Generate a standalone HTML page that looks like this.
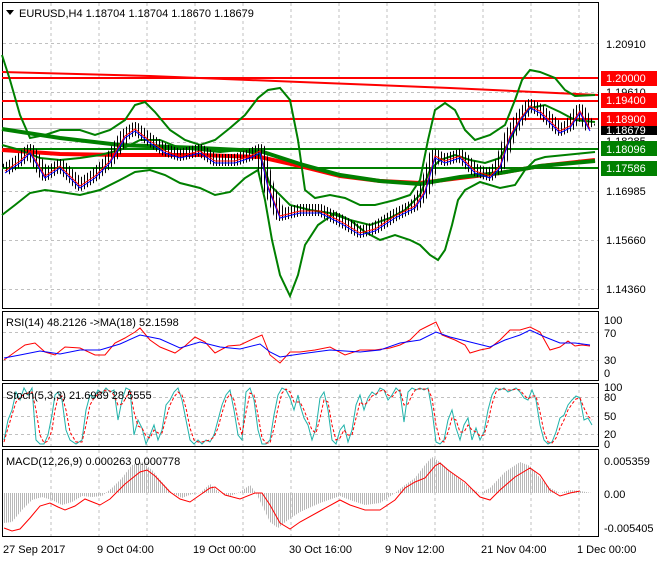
<!DOCTYPE html>
<html><head><meta charset="utf-8"><style>
body{margin:0;background:#fff;width:660px;height:560px;overflow:hidden}
svg text{font-family:"Liberation Sans",sans-serif;font-size:11px;fill:#000}
</style></head><body>
<svg width="660" height="560" xmlns="http://www.w3.org/2000/svg">
<defs>
<pattern id="hp" width="2" height="10" patternUnits="userSpaceOnUse"><rect x="0" y="0" width="1" height="10" fill="#b8b8b8"/></pattern>
<pattern id="bp" width="3" height="10" patternUnits="userSpaceOnUse"><rect x="0" y="0" width="1" height="10" fill="#000"/></pattern>
<mask id="bm" maskUnits="userSpaceOnUse" x="0" y="0" width="660" height="320">
<polyline fill="none" stroke="#fff" stroke-width="12" stroke-linejoin="round" points="5,170 20,160 30,150 45,175 60,165 80,185 95,175 110,160 125,135 135,128 150,140 165,150 180,155 200,150 215,160 235,160 250,155 260,150 268,185 280,215 300,210 320,210 340,220 360,232 375,228 395,215 415,205 425,190 435,155 445,160 460,155 475,170 490,175 500,165 510,135 520,118 530,105 540,110 550,120 560,130 570,125 580,110 590,128"/>
</mask>
</defs>
<rect width="660" height="560" fill="#fff"/>
<path stroke="#c0c0c0" stroke-dasharray="3,3" stroke-width="1" fill="none" d="M51,3V308M99,3V308M147,3V308M195,3V308M243,3V308M291,3V308M339,3V308M387,3V308M435,3V308M483,3V308M531,3V308M579,3V308
M51,312V380M99,312V380M147,312V380M195,312V380M243,312V380M291,312V380M339,312V380M387,312V380M435,312V380M483,312V380M531,312V380M579,312V380
M51,384V446M99,384V446M147,384V446M195,384V446M243,384V446M291,384V446M339,384V446M387,384V446M435,384V446M483,384V446M531,384V446M579,384V446
M51,450V536M99,450V536M147,450V536M195,450V536M243,450V536M291,450V536M339,450V536M387,450V536M435,450V536M483,450V536M531,450V536M579,450V536
M3,43.5H598M3,92.5H598M3,142.5H598M3,191.5H598M3,240.5H598M3,289.5H598M3,332.5H598M3,360.5H598M3,397.5H598M3,416.5H598M3,434.5H598"/>
<g fill="none" stroke="#000" stroke-width="1">
<rect x="2.5" y="2.5" width="596" height="306"/>
<rect x="2.5" y="311.5" width="596" height="69"/>
<rect x="2.5" y="383.5" width="596" height="63"/>
<rect x="2.5" y="449.5" width="596" height="87"/>
</g>
<g fill="none">
<polyline stroke="#ff0000" stroke-width="2" points="2,72 150,76 300,82 450,88 598,95"/>
<line x1="2" y1="78" x2="598" y2="78" stroke="#ff0000" stroke-width="2"/>
<line x1="2" y1="101" x2="598" y2="101" stroke="#ff0000" stroke-width="2"/>
<line x1="2" y1="119" x2="598" y2="119" stroke="#ff0000" stroke-width="2"/>
<line x1="2" y1="149" x2="598" y2="149" stroke="#008000" stroke-width="2"/>
<line x1="2" y1="168" x2="598" y2="168" stroke="#008000" stroke-width="2"/>
<line x1="2" y1="128.5" x2="598" y2="128.5" stroke="#c0c0c0" stroke-width="1"/>
<polyline stroke="#ff0000" stroke-width="4" points="2,150 60,154 120,155 200,155 260,157 300,166 340,176 380,181 420,183 460,178 500,173 540,166 595,160"/>
<polyline stroke="#008000" stroke-width="4" points="2,129 60,138 120,145 200,148 260,151 300,164 340,175 380,181 420,184 460,177 500,173 540,166 595,161"/>
<polyline stroke="#008000" stroke-width="2" points="2,55 10,80 20,115 30,138 45,135 60,130 80,130 95,135 110,130 125,120 135,105 145,102 155,112 170,130 185,140 200,145 215,140 230,128 245,115 258,98 268,90 280,88 290,100 298,140 305,190 315,198 330,195 345,198 360,205 375,205 395,200 410,195 420,180 428,140 435,110 445,103 455,110 465,130 475,140 490,135 505,125 515,100 522,80 530,70 540,72 555,78 565,90 575,96 595,95"/>
<polyline stroke="#008000" stroke-width="2" points="2,215 15,205 30,193 45,190 60,192 80,195 100,190 120,180 135,172 150,170 165,175 180,183 200,188 215,195 230,192 245,178 258,170 265,200 272,240 280,275 290,296 298,275 305,245 318,225 335,213 350,220 365,232 380,240 395,235 410,240 420,245 430,255 438,260 445,250 452,225 458,200 465,190 480,182 500,188 515,185 525,170 535,160 545,157 565,155 595,152"/>
<polyline stroke="#008000" stroke-width="2" points="2,145 20,150 40,158 60,160 80,158 100,155 120,150 140,140 160,140 180,148 200,150 220,152 240,150 260,155 270,185 290,205 310,210 330,213 350,220 370,225 390,218 405,210 420,195 430,170 440,160 455,155 470,160 485,163 500,158 510,140 520,120 530,108 545,105 560,112 575,120 595,122"/>
<rect x="3" y="80" width="592" height="170" fill="url(#bp)" mask="url(#bm)"/>
<polyline stroke="#ff0000" stroke-width="1" points="5,171 20,161 30,151 45,176 60,166 80,186 95,176 110,161 125,136 135,129 150,141 165,151 180,156 200,151 215,161 235,161 250,156 260,151 268,186 280,216 300,211 320,211 340,221 360,233 375,229 395,216 415,206 425,191 435,156 445,161 460,156 475,171 490,176 500,166 510,136 520,119 530,106 540,111 550,121 560,131 570,126 580,111 590,129"/>
<polyline stroke="#0000ff" stroke-width="1" points="5,173 20,163 30,153 45,178 60,168 80,188 95,178 110,163 125,138 135,131 150,143 165,153 180,158 200,153 215,163 235,163 250,158 260,153 268,188 280,218 300,213 320,213 340,223 360,235 375,231 395,218 415,208 425,193 435,158 445,163 460,158 475,173 490,178 500,168 510,138 520,121 530,108 540,113 550,123 560,133 570,128 580,113 590,131"/>
</g>
<g fill="none">
<polyline stroke="#ff0000" stroke-width="1" points="4,360 15,352 25,345 35,343 45,352 55,355 65,347 80,348 95,355 105,355 115,343 125,338 135,332 140,328 150,340 160,347 175,353 185,346 195,337 205,342 215,353 228,346 240,345 255,338 262,335 270,355 280,363 290,352 300,352 315,350 330,347 345,355 360,350 375,350 390,348 400,345 410,340 420,330 428,326 436,322 442,335 455,340 465,345 470,353 480,350 490,348 500,340 510,330 520,330 530,327 540,332 550,350 560,347 568,341 575,346 582,345 590,346"/>
<polyline stroke="#0000ff" stroke-width="1" points="4,358 20,355 40,351 60,354 80,350 100,350 120,344 140,335 160,339 180,348 200,342 220,347 240,349 260,344 270,352 280,357 300,354 330,350 360,352 380,350 400,343 420,340 436,332 450,337 470,342 490,347 505,340 520,335 530,330 545,337 560,343 575,343 590,345"/>
</g>
<polyline fill="none" stroke="#20b2aa" stroke-width="1" points="4,440 8,420 12,410 16,392 20,400 24,388 28,395 32,388 36,440 40,444 44,444 48,435 52,415 55,395 58,392 62,400 66,430 70,440 76,444 82,440 86,410 90,395 94,398 98,390 102,393 106,388 110,392 114,390 118,420 122,400 126,388 130,390 134,435 138,420 142,428 146,444 150,435 154,425 158,440 162,430 166,405 170,400 174,392 178,388 182,400 186,420 190,440 194,444 198,440 202,444 206,440 210,442 214,435 218,420 222,405 226,395 230,390 234,410 238,435 242,440 246,392 250,388 254,400 258,430 262,444 266,444 270,440 274,415 278,395 282,388 286,390 290,398 294,410 298,395 300,405 304,418 308,425 312,440 316,428 320,398 324,392 328,410 332,440 336,444 340,430 344,425 348,442 352,430 356,405 360,395 364,410 368,398 372,392 376,395 380,388 384,390 388,400 392,395 396,388 400,392 404,422 408,392 412,388 416,390 420,388 424,390 428,388 432,410 436,442 440,444 444,440 448,420 452,410 456,428 460,440 464,425 468,418 472,440 476,428 480,440 484,432 488,410 492,395 496,388 500,390 504,388 508,392 512,390 516,388 520,392 524,398 528,400 532,390 536,400 540,425 544,440 548,444 552,442 556,432 560,418 564,415 568,405 572,400 576,396 580,398 584,420 588,418 592,425"/>
<polyline fill="none" stroke="#ff0000" stroke-width="1" stroke-dasharray="3,2" points="4,442 8,428 12,415 16,402 20,398 24,394 28,393 32,392 36,410 40,435 44,443 48,441 52,430 55,410 58,398 62,396 66,410 70,432 76,442 82,442 86,425 90,405 94,398 98,394 102,392 106,390 110,391 114,395 118,405 122,404 126,398 130,390 134,412 138,426 142,428 146,436 150,438 154,430 158,433 162,433 166,418 170,405 174,397 178,392 182,395 186,408 190,428 194,440 198,442 202,442 206,441 210,440 214,437 218,428 222,413 226,400 230,394 234,400 238,420 242,435 246,412 250,393 254,395 258,415 262,438 266,443 270,443 274,428 278,408 282,393 286,389 290,392 294,402 298,402 300,402 304,410 308,420 312,430 316,433 320,418 324,400 328,402 332,425 336,440 340,438 344,430 348,435 352,435 356,418 360,402 364,405 368,402 372,396 376,394 380,391 384,390 388,395 392,397 396,392 400,390 404,405 408,404 412,395 416,389 420,389 424,389 428,389 432,398 436,425 440,440 444,442 448,432 452,418 456,420 460,432 464,432 468,425 472,430 476,432 480,436 484,435 488,422 492,404 496,392 500,389 504,389 508,390 512,390 516,389 520,390 524,395 528,399 532,396 536,396 540,412 544,432 548,442 552,443 556,438 560,428 564,420 568,410 572,404 576,399 580,398 584,408 588,416 592,420"/>
<polygon fill="url(#hp)" points="4,493 4,523 12,522 22,510 32,500 42,497 52,500 62,505 72,502 82,496 92,497 102,496 112,488 122,478 132,465 142,462 152,470 162,482 172,493 182,498 192,494 200,493 210,484 220,493 230,496 240,492 250,485 256,493 262,505 270,522 278,528 288,520 300,512 320,503 340,496 350,500 365,505 380,503 395,493 405,485 415,478 425,465 432,457 440,462 455,475 470,488 480,493 490,488 505,472 520,462 530,466 540,478 550,488 560,493 570,490 580,491 592,493"/>
<polyline fill="none" stroke="#ff0000" stroke-width="1" points="4,528 12,531 20,529 30,518 40,506 50,503 58,507 65,510 75,506 85,499 95,503 100,505 110,499 125,484 140,472 147,470 155,476 170,492 180,499 190,502 200,495 210,488 215,487 225,495 240,499 255,493 262,493 270,505 280,523 290,529 300,522 320,511 340,500 350,505 365,510 380,510 395,500 405,488 415,482 425,478 435,466 440,463 448,470 465,482 480,497 490,500 500,490 515,477 530,468 540,475 550,490 560,496 570,493 580,491"/>
<path d="M6,10 L14,10 L10,15 Z" fill="#000"/>
<text x="19" y="17">EURUSD,H4  1.18704 1.18704 1.18670 1.18679</text>
<text x="6" y="326">RSI(14) 48.2126  -&gt;MA(18) 52.1598</text>
<text x="6" y="399">Stoch(5,3,3) 21.6989 28.5555</text>
<text x="6" y="465">MACD(12,26,9) 0.000263 0.000778</text>
<g>
<text x="606" y="48">1.20910</text>
<text x="606" y="96">1.19610</text>
<text x="606" y="145">1.18285</text>
<text x="606" y="195">1.16985</text>
<text x="606" y="244">1.15660</text>
<text x="606" y="293">1.14360</text>
<rect x="601" y="71" width="56" height="15" fill="#ff0000"/><text x="606" y="82" style="fill:#fff">1.20000</text>
<rect x="601" y="93" width="56" height="15" fill="#ff0000"/><text x="606" y="104" style="fill:#fff">1.19400</text>
<rect x="601" y="112" width="56" height="14" fill="#ff0000"/><text x="606" y="123" style="fill:#fff">1.18900</text>
<rect x="601" y="126" width="56" height="9" fill="#000"/><text x="606" y="134" style="fill:#fff">1.18679</text>
<rect x="601" y="141" width="56" height="15" fill="#008000"/><text x="606" y="153" style="fill:#fff">1.18096</text>
<rect x="601" y="161" width="56" height="15" fill="#008000"/><text x="606" y="172" style="fill:#fff">1.17586</text>
<text x="604" y="324">100</text><text x="604" y="337">70</text><text x="604" y="364">30</text><text x="604" y="377">0</text>
<text x="604" y="391">100</text><text x="604" y="401">80</text><text x="604" y="420">50</text><text x="604" y="438">20</text><text x="604" y="448">0</text>
<text x="604" y="465">0.005359</text><text x="604" y="498">0.00</text><text x="604" y="532">-0.005405</text>
</g>
<g>
<text x="3" y="553">27 Sep 2017</text>
<text x="97" y="553">9 Oct 04:00</text>
<text x="193" y="553">19 Oct 00:00</text>
<text x="289" y="553">30 Oct 16:00</text>
<text x="385" y="553">9 Nov 12:00</text>
<text x="481" y="553">21 Nov 04:00</text>
<text x="577" y="553">1 Dec 00:00</text>
</g>
</svg>
</body></html>
